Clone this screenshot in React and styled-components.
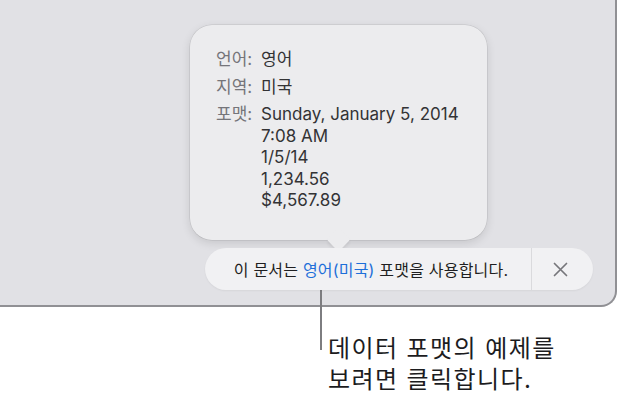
import styled, { createGlobalStyle } from "styled-components";

const Global = createGlobalStyle`
  html, body {
    margin: 0;
    padding: 0;
    background: #ffffff;
  }
  body {
    font-family: Inter, "Noto Sans CJK KR", sans-serif;
    -webkit-font-smoothing: antialiased;
  }
`;

function App() {
  return (
    <Page>
      <Global />
      <Window>
        <Popover>
          <InfoRow>
            <Label>언어:</Label>
            <Value>영어</Value>
          </InfoRow>
          <InfoRow>
            <Label>지역:</Label>
            <Value>미국</Value>
          </InfoRow>
          <InfoRow>
            <Label>포맷:</Label>
            <FormatList>
              <span>Sunday, January 5, 2014</span>
              <span>7:08 AM</span>
              <span>1/5/14</span>
              <span>1,234.56</span>
              <span>$4,567.89</span>
            </FormatList>
          </InfoRow>
        </Popover>

        <Bar>
          <Message>
            이 문서는 <LinkText>영어(미국)</LinkText> 포맷을 사용합니다.
          </Message>
          <CloseButton aria-label="닫기">
            <svg width="15" height="15" viewBox="0 0 15 15">
              <path
                d="M1.5 1.5 L13.5 13.5 M13.5 1.5 L1.5 13.5"
                stroke="#76767a"
                strokeWidth="1.7"
                strokeLinecap="round"
              />
            </svg>
          </CloseButton>
        </Bar>
      </Window>

      <Callout>
        <Leader />
        <CalloutText>
          데이터 포맷의 예제를
          <br />
          보려면 클릭합니다.
        </CalloutText>
      </Callout>
    </Page>
  );
}

const Page = styled.div`
  width: 619px;
  height: 401px;
  overflow: hidden;
`;

const Window = styled.div`
  width: 617px;
  height: 307px;
  box-sizing: border-box;
  background: #e1e1e5;
  border-right: 2px solid #909094;
  border-bottom: 2px solid #909094;
  border-bottom-right-radius: 16px;
  display: flex;
  flex-direction: column;
  align-items: flex-start;
  padding-top: 25px;
`;

const Popover = styled.div`
  position: relative;
  margin-left: 190px;
  width: 297px;
  height: 215px;
  box-sizing: border-box;
  padding: 24px 0 0 26px;
  background: #ececee;
  border-radius: 22px;
  box-shadow: 0 0 0 0.5px rgba(0, 0, 0, 0.12), 0 3px 10px rgba(0, 0, 0, 0.12);
  display: flex;
  flex-direction: column;
  gap: 6px;

  &::after {
    content: "";
    position: absolute;
    left: 140px;
    bottom: -8px;
    width: 17px;
    height: 17px;
    background: #ececee;
    transform: rotate(45deg);
    border-radius: 3px;
    box-shadow: 2px 2px 3px rgba(0, 0, 0, 0.07);
  }
`;

const InfoRow = styled.div`
  display: flex;
  font-size: 17px;
  line-height: 21.5px;
`;

const Label = styled.span`
  width: 45px;
  flex-shrink: 0;
  color: #75757a;
`;

const Value = styled.span`
  color: #333335;
`;

const FormatList = styled.div`
  display: flex;
  flex-direction: column;
  color: #333335;
`;

const Bar = styled.div`
  position: relative;
  z-index: 1;
  margin-left: 205px;
  margin-top: 8px;
  width: 388px;
  height: 42px;
  background: #f1f1f3;
  border-radius: 21px;
  display: flex;
  align-items: stretch;
  box-shadow: 0 1px 2px rgba(0, 0, 0, 0.05);
`;

const Message = styled.div`
  flex: 1;
  display: flex;
  align-items: center;
  justify-content: center;
  padding-left: 6px;
  font-size: 16px;
  letter-spacing: 0.2px;
  color: #1f1f21;
  white-space: pre;
  border-right: 1.5px solid #dadadd;
`;

const LinkText = styled.span`
  color: #1e6fd9;
`;

const CloseButton = styled.button`
  width: 61px;
  border: none;
  background: transparent;
  display: flex;
  align-items: center;
  justify-content: center;
  padding: 0 4px 0 0;
`;

const Callout = styled.div`
  position: relative;
  margin-left: 328px;
  margin-top: 26px;
`;

const Leader = styled.div`
  position: absolute;
  left: -8px;
  top: -54px;
  width: 2px;
  height: 71px;
  background: #7d7d80;
`;

const CalloutText = styled.div`
  font-size: 24px;
  letter-spacing: 1.4px;
  line-height: 31px;
  color: #1c1c1e;
`;

export default App;
